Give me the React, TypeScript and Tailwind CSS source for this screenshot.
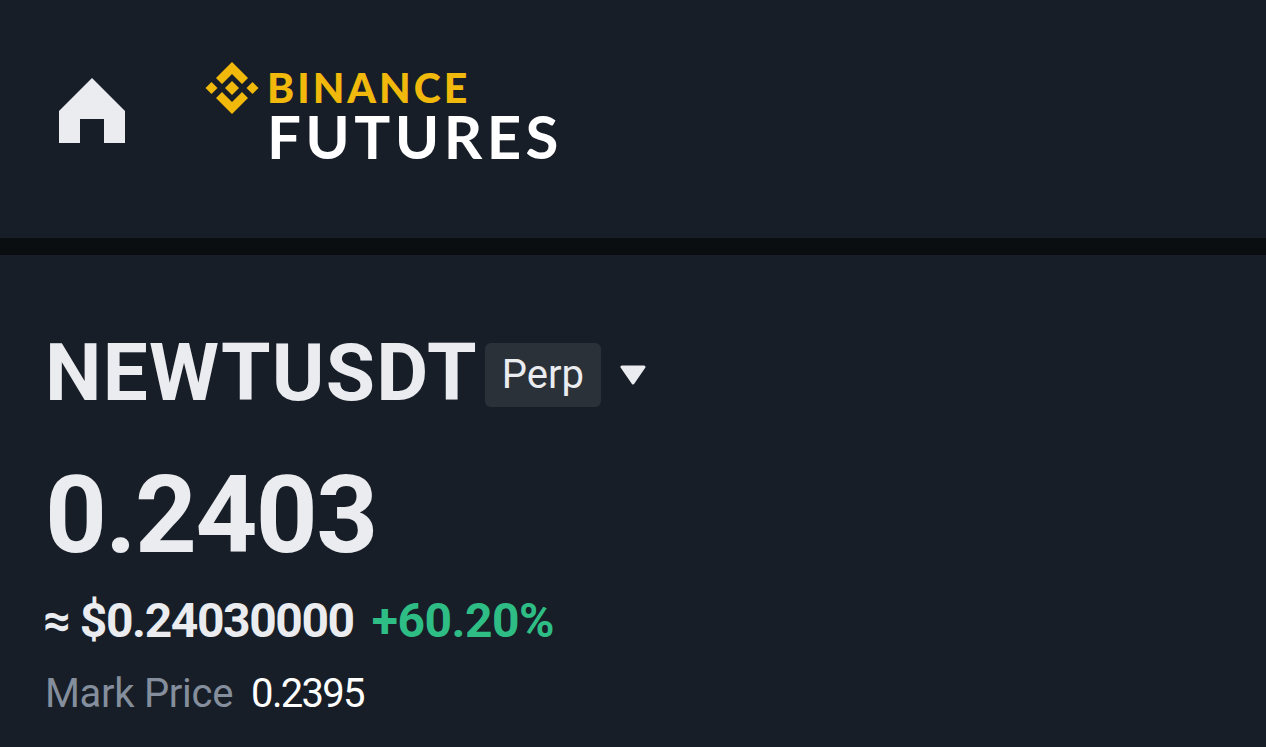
export default function App() {
  return (
    <div className="w-[1266px] h-[747px] overflow-hidden bg-[#181e27] font-['Roboto',sans-serif]">
      <header className="h-[238px] flex items-start pl-[58px]">
        <svg width="68" height="66" viewBox="0 0 68 66" className="mt-[78px] shrink-0">
          <path d="M34 0 L67 33 V65 H46 V41 H22 V65 H1 V33 Z" fill="#eaecef" />
        </svg>
        <svg width="54" height="54" viewBox="0 0 54 54" className="ml-[79px] mt-[61px] shrink-0">
          <path d="M27 1 L43 17 L37 23 L27 13 L17 23 L11 17 Z" fill="#f0b90b" />
          <path d="M27 53 L43 37 L37 31 L27 41 L17 31 L11 37 Z" fill="#f0b90b" />
          <path d="M6.5 21 L12.5 27 L6.5 33 L0.5 27 Z" fill="#f0b90b" />
          <path d="M47.5 21 L53.5 27 L47.5 33 L41.5 27 Z" fill="#f0b90b" />
          <path d="M27 20 L34 27 L27 34 L20 27 Z" fill="#f0b90b" />
        </svg>
        <div className="ml-[8px] mt-[66px] flex flex-col font-['Lato',sans-serif]">
          <span className="text-[41px] leading-[44px] font-black text-[#f0b90b] tracking-[3px]">BINANCE</span>
          <span className="text-[60px] leading-[52px] font-bold text-white tracking-[4.4px]">FUTURES</span>
        </div>
      </header>
      <div className="h-[17px] bg-[#0b0e11]" />
      <main className="pl-[45px] pt-[76px] flex flex-col items-start">
        <div className="flex items-center h-[84px]">
          <span className="text-[80px] leading-[84px] font-bold text-[#eaecef] tracking-[1.3px]">NEWTUSDT</span>
          <span className="ml-[7px] mt-[4px] w-[116px] h-[64px] rounded-[6px] bg-[#2b3139] flex items-center justify-center text-[40px] text-[#eaecef]">Perp</span>
          <svg width="26" height="20" viewBox="0 0 26 20" className="ml-[19px] mt-[4px]">
            <path d="M2 2 H24 L13 18 Z" fill="#eaecef" stroke="#eaecef" strokeWidth="3" strokeLinejoin="round" />
          </svg>
        </div>
        <div className="mt-[40px] text-[108px] leading-[120px] font-bold text-[#eaecef] tracking-[-1.6px]">0.2403</div>
        <div className="mt-[20px] -ml-[2px] flex items-center text-[48px] leading-[52px] font-bold">
          <span className="text-[#eaecef] tracking-[-1.4px]">≈ $0.24030000</span>
          <span className="ml-[18px] text-[#2ebd85] tracking-[-0.5px]">+60.20%</span>
        </div>
        <div className="mt-[25px] flex items-center text-[40px] leading-[44px]">
          <span className="text-[#848e9c] tracking-[-0.3px]">Mark Price</span>
          <span className="ml-[18px] text-white tracking-[-1.7px]">0.2395</span>
        </div>
      </main>
    </div>
  );
}
